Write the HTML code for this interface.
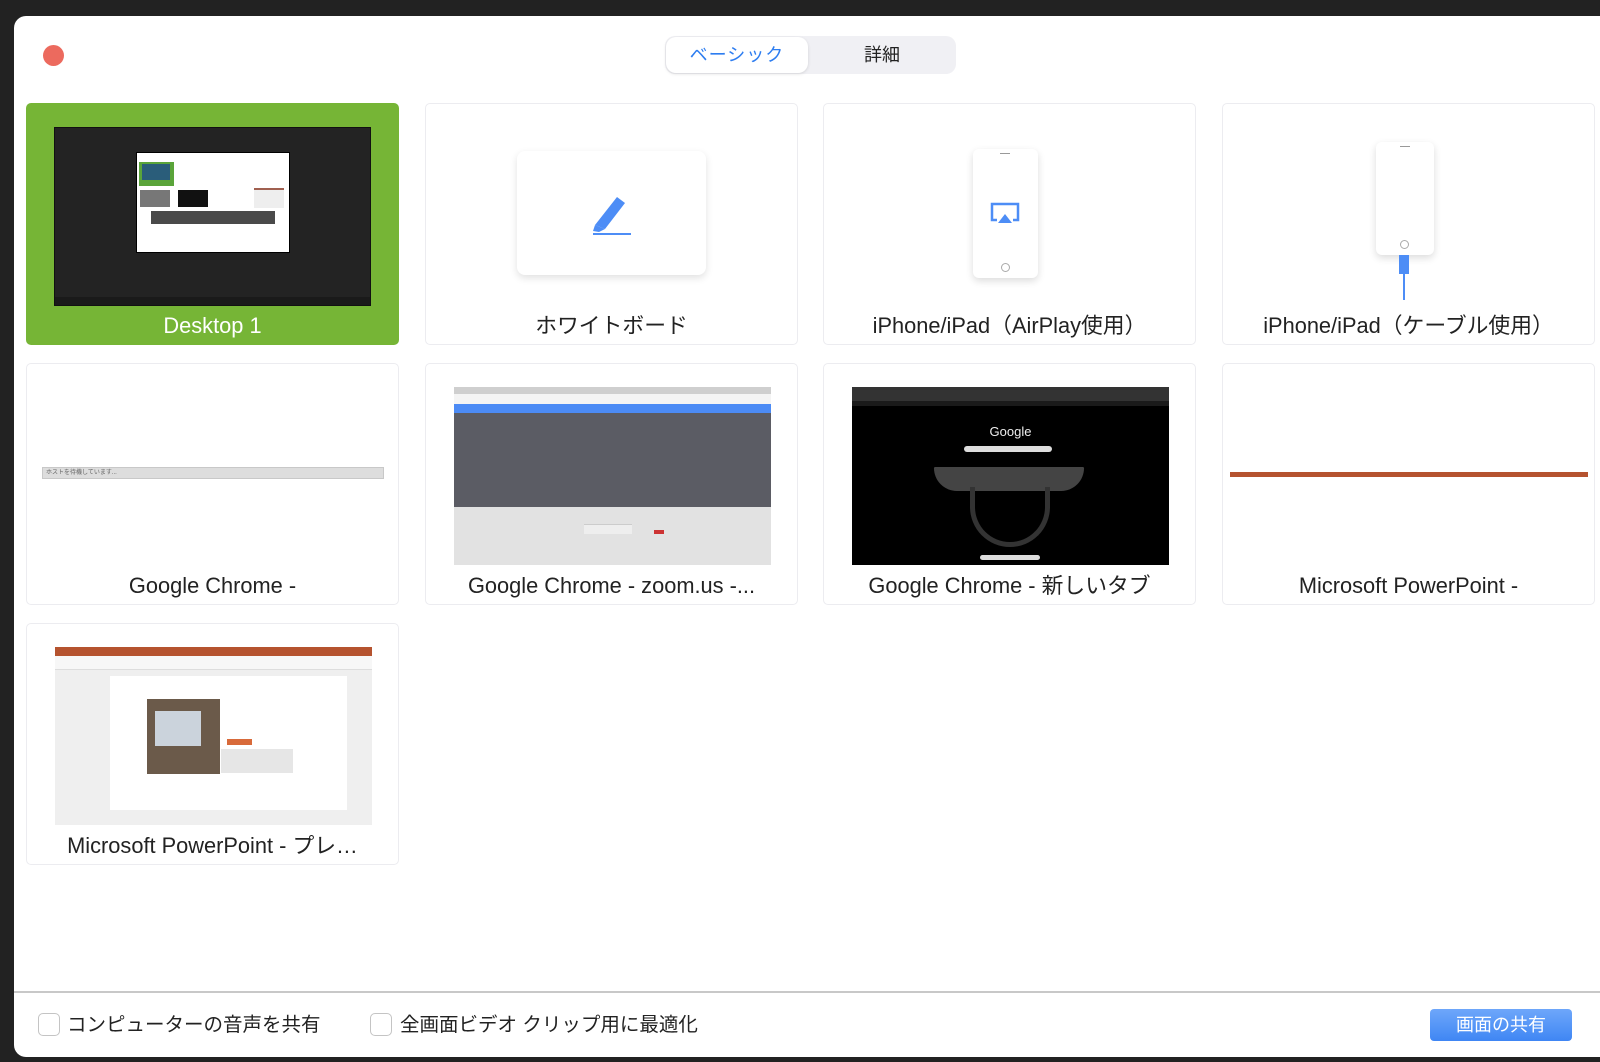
<!DOCTYPE html>
<html><head><meta charset="utf-8"><style>
*{box-sizing:border-box;margin:0;padding:0}
body{width:1600px;height:1062px;background:#222;position:relative;overflow:hidden;font-family:"Liberation Sans","Noto Sans CJK JP",sans-serif}
.win{position:absolute;left:14px;top:16px;width:1600px;height:1041px;background:#fff;border-radius:12px 0 0 12px}
.abs{position:absolute}
.card{position:absolute;width:373px;height:242px;border:1px solid #ececf0;border-radius:5px;background:#fff}
.lab{position:absolute;left:0;right:0;text-align:center;font-size:21.8px;color:#222;top:209px;line-height:26px;height:26px;white-space:nowrap}
.sel{background:#76b536;border-color:#76b536}
.sel .lab{color:#fff}
</style></head><body>
<div class="win"></div>
<div class="abs" style="left:43px;top:45px;width:21px;height:21px;border-radius:50%;background:#ec6a5e"></div>
<div class="abs" style="left:665px;top:36px;width:291px;height:38px;background:#f0f0f4;border-radius:10px"></div>
<div class="abs" style="left:666px;top:37px;width:142px;height:36px;background:#fff;border-radius:10px;box-shadow:0 1px 3px rgba(0,0,0,.12);color:#2d7df0;font-size:18px;text-align:center;line-height:36px;letter-spacing:1px">ベーシック</div>
<div class="abs" style="left:808px;top:37px;width:148px;height:36px;color:#222;font-size:18px;text-align:center;line-height:36px">詳細</div>

<!-- row1 -->
<div class="card sel" style="left:26px;top:103px">
 <div class="abs" style="left:27px;top:23px;width:317px;height:179px;background:#232323;border:1px solid #111">
  <div class="abs" style="left:81px;top:24px;width:154px;height:101px;background:#fff;border:1px solid #000">
   <div class="abs" style="left:2px;top:9px;width:35px;height:24px;background:#5aa43a"></div>
   <div class="abs" style="left:5px;top:11px;width:28px;height:16px;background:#2a5d7a"></div>
   <div class="abs" style="left:3px;top:37px;width:30px;height:17px;background:#777"></div>
   <div class="abs" style="left:41px;top:37px;width:30px;height:17px;background:#111"></div>
   <div class="abs" style="left:117px;top:35px;width:30px;height:20px;background:#eee;border-top:2px solid #a06050"></div>
   <div class="abs" style="left:14px;top:58px;width:124px;height:13px;background:#4a4a4a"></div>
  </div>
  <div class="abs" style="left:0;bottom:0;width:100%;height:8px;background:#1a1a1a"></div>
 </div>
 <div class="lab">Desktop 1</div>
</div>
<div class="card" style="left:425px;top:103px">
 <div class="abs" style="left:91px;top:47px;width:189px;height:124px;background:#fff;border-radius:8px;box-shadow:0 3px 8px rgba(0,0,0,.12)">
  <svg class="abs" style="left:70px;top:38px" width="50" height="48" viewBox="0 0 50 48"><path d="M8 36 L30 8 L38 14 L18 40 Z" fill="#4d8df6"/><path d="M8 36 L18 40 L12 43 L6 42 Z" fill="#4d8df6"/><rect x="6" y="44" width="38" height="2" fill="#4d8df6"/></svg>
 </div>
 <div class="lab">ホワイトボード</div>
</div>
<div class="card" style="left:823px;top:103px">
 <div class="abs" style="left:149px;top:45px;width:65px;height:129px;background:#fff;border-radius:6px;box-shadow:0 3px 8px rgba(0,0,0,.14)">
  <div class="abs" style="left:27px;top:4px;width:10px;height:1px;background:#999"></div>
  <svg class="abs" style="left:17px;top:53px" width="30" height="26" viewBox="0 0 30 26"><path d="M7 18H2V2H28V18H23" fill="none" stroke="#4d8df6" stroke-width="2.5"/><path d="M15 12L22 21H8Z" fill="#4d8df6"/></svg>
  <div class="abs" style="left:28px;top:114px;width:9px;height:9px;border:1.5px solid #aaa;border-radius:50%"></div>
 </div>
 <div class="lab">iPhone/iPad（AirPlay使用）</div>
</div>
<div class="card" style="left:1222px;top:103px">
 <div class="abs" style="left:153px;top:38px;width:58px;height:113px;background:#fff;border-radius:6px;box-shadow:0 3px 8px rgba(0,0,0,.14)">
  <div class="abs" style="left:24px;top:4px;width:10px;height:1px;background:#999"></div>
  <div class="abs" style="left:24px;top:98px;width:9px;height:9px;border:1.5px solid #aaa;border-radius:50%"></div>
 </div>
 <div class="abs" style="left:176px;top:151px;width:10px;height:19px;background:#4d8df6"></div>
 <div class="abs" style="left:180px;top:170px;width:2px;height:26px;background:#4d8df6"></div>
 <div class="lab">iPhone/iPad（ケーブル使用）</div>
</div>

<!-- row2 -->
<div class="card" style="left:26px;top:363px">
 <div class="abs" style="left:15px;top:103px;width:342px;height:12px;background:#ddd;border:1px solid #c8c8c8;font-size:6px;color:#666;line-height:10px;padding-left:3px">ホストを待機しています...</div>
 <div class="lab">Google Chrome -</div>
</div>
<div class="card" style="left:425px;top:363px">
 <div class="abs" style="left:28px;top:23px;width:317px;height:178px;background:#e2e2e2">
  <div class="abs" style="left:0;top:0;width:100%;height:7px;background:#cfcfcf"></div>
  <div class="abs" style="left:0;top:7px;width:100%;height:10px;background:#f4f4f4"></div>
  <div class="abs" style="left:0;top:17px;width:100%;height:9px;background:#4c8bf5"></div>
  <div class="abs" style="left:0;top:26px;width:100%;height:94px;background:#5b5c64"></div>
  <div class="abs" style="left:130px;top:137px;width:48px;height:10px;background:#eee;border-top:1px solid #ccc"></div>
  <div class="abs" style="left:200px;top:143px;width:10px;height:4px;background:#c33"></div>
 </div>
 <div class="lab">Google Chrome - zoom.us -...</div>
</div>
<div class="card" style="left:823px;top:363px">
 <div class="abs" style="left:28px;top:23px;width:317px;height:178px;background:#000">
  <div class="abs" style="left:0;top:0;width:100%;height:14px;background:#333"></div>
  <div class="abs" style="left:0;top:14px;width:100%;height:5px;background:#1a1a1a"></div>
  <div class="abs" style="left:0;top:37px;width:100%;text-align:center;color:#eee;font-size:13px">Google</div>
  <div class="abs" style="left:112px;top:59px;width:88px;height:6px;background:#ddd;border-radius:3px"></div>
  <div class="abs" style="left:82px;top:80px;width:150px;height:24px;background:#444;border-radius:2px 2px 40px 40px"></div>
  <div class="abs" style="left:118px;top:100px;width:80px;height:60px;border:5px solid #333;border-top:none;border-radius:0 0 40px 40px"></div>
  <div class="abs" style="left:128px;top:168px;width:60px;height:5px;background:#ddd;border-radius:3px"></div>
 </div>
 <div class="lab">Google Chrome - 新しいタブ</div>
</div>
<div class="card" style="left:1222px;top:363px">
 <div class="abs" style="left:7px;top:108px;width:358px;height:5px;background:#b5532f"></div>
 <div class="lab">Microsoft PowerPoint -</div>
</div>

<!-- row3 -->
<div class="card" style="left:26px;top:623px">
 <div class="abs" style="left:28px;top:23px;width:317px;height:178px;background:#efefef">
  <div class="abs" style="left:0;top:0;width:100%;height:9px;background:#b5532f"></div>
  <div class="abs" style="left:0;top:9px;width:100%;height:14px;background:#f7f7f7;border-bottom:1px solid #ddd"></div>
  <div class="abs" style="left:55px;top:29px;width:237px;height:134px;background:#fff"></div>
  <div class="abs" style="left:92px;top:52px;width:73px;height:75px;background:#6b5a4a"></div>
  <div class="abs" style="left:100px;top:64px;width:46px;height:35px;background:#cbd3dc"></div>
  <div class="abs" style="left:172px;top:92px;width:25px;height:6px;background:#d86a3a"></div>
  <div class="abs" style="left:166px;top:102px;width:72px;height:24px;background:#e6e6e6"></div>
 </div>
 <div class="lab">Microsoft PowerPoint - プレ…</div>
</div>

<!-- footer -->
<div class="abs" style="left:14px;top:991px;width:1586px;height:2px;background:#c8c8c8"></div>
<div class="abs" style="left:38px;top:1013px;width:22px;height:23px;border:1px solid #c4c4c4;border-radius:5px;background:#fff"></div>
<div class="abs" style="left:67px;top:1012px;font-size:19.5px;color:#222;line-height:26px">コンピューターの音声を共有</div>
<div class="abs" style="left:370px;top:1013px;width:22px;height:23px;border:1px solid #c4c4c4;border-radius:5px;background:#fff"></div>
<div class="abs" style="left:400px;top:1012px;font-size:19.5px;color:#222;line-height:26px">全画面ビデオ クリップ用に最適化</div>
<div class="abs" style="left:1430px;top:1009px;width:142px;height:32px;border-radius:4px;background:linear-gradient(#6ea7fa,#3f86f4);color:#fff;font-size:18px;text-align:center;line-height:32px">画面の共有</div>
</body></html>
